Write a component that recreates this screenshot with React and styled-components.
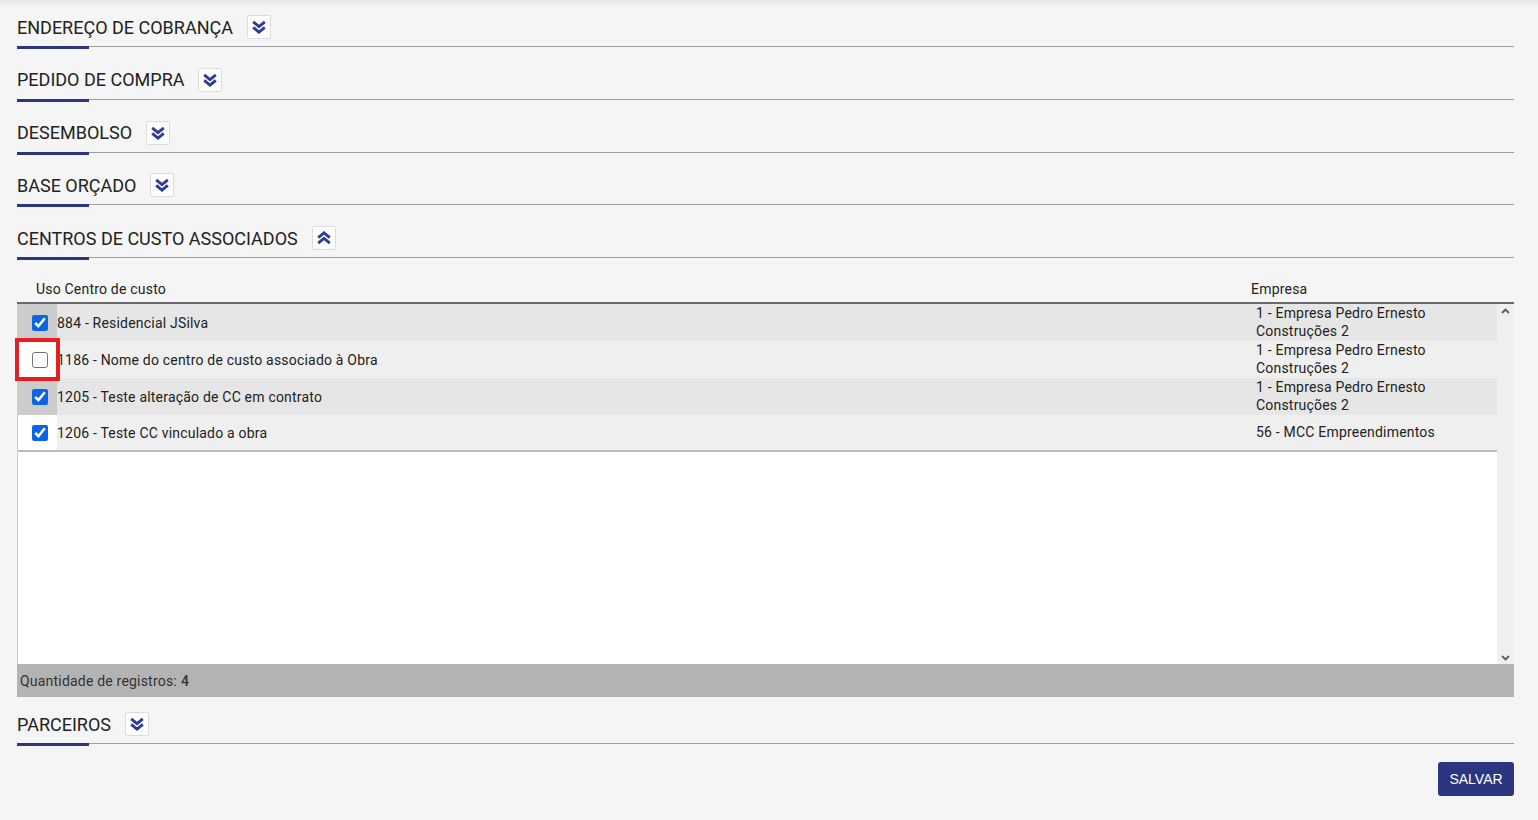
import React, { useState } from 'react';
import styled, { createGlobalStyle } from 'styled-components';

const GlobalStyle = createGlobalStyle`
  html, body {
    margin: 0;
    padding: 0;
    background: #f5f5f5;
  }
  body {
    font-family: Roboto, "Liberation Sans", Arial, sans-serif;
    color: #222;
  }
`;

const Page = styled.div`
  min-height: 820px;
  box-sizing: border-box;
  padding: 15px 24px 0 17px;
  background: linear-gradient(#e6e6e6 0, #f5f5f5 7px);
`;

const Section = styled.section`
  margin-bottom: ${props => props.last ? '0' : '18.75px'};
`;

const SectionHeader = styled.div`
  display: flex;
  align-items: center;
  height: 24px;
`;

const SectionTitle = styled.h2`
  margin: 0;
  padding-top: 1px;
  font-size: 18px;
  font-weight: 400;
  line-height: 24px;
  color: #222;
  text-transform: uppercase;
`;

const ToggleButton = styled.button`
  margin-left: 14px;
  width: 24px;
  height: 24px;
  padding: 0;
  display: flex;
  align-items: center;
  justify-content: center;
  background: #fff;
  border: 1px solid #dcdcdc;
  border-radius: 2px;
  cursor: pointer;
`;

const Rule = styled.div`
  display: flex;
  margin-top: 7px;
  height: 3px;
`;

const RuleAccent = styled.div`
  width: 72px;
  height: 3px;
  background: #2b3580;
`;

const RuleLine = styled.div`
  flex: 1;
  border-top: 1px solid #9e9e9e;
`;

const TableWrap = styled.div`
  margin-top: 18px;
  font-size: 14px;
  letter-spacing: 0.2px;
`;

const HeadRow = styled.div`
  display: grid;
  grid-template-columns: 1fr 263px;
  align-items: center;
  height: 22px;
  padding-bottom: 2px;
  border-bottom: 2px solid #6a6a6a;
`;

const HeadCell = styled.div`
  padding-left: ${props => props.pad || 0}px;
  color: #222;
`;

const TableBody = styled.div`
  display: grid;
  grid-template-columns: 1fr 17px;
  height: 360px;
  background: #fff;
  border-left: 1px solid #cfcfcf;
`;

const RowList = styled.div`
  display: flex;
  flex-direction: column;
`;

const Rows = styled.div`
  border-bottom: 2px solid #bdbdbd;
`;

const Row = styled.div`
  display: grid;
  grid-template-columns: 39px 1fr 246px;
  min-height: 35px;
  background: ${props => props.alt ? '#e6e6e6' : '#efefef'};
`;

const CheckCell = styled.label`
  display: flex;
  align-items: center;
  justify-content: flex-end;
  padding-right: 9px;
  background: ${props => props.alt ? '#cccccc' : '#ffffff'};
  ${props => props.highlight && `
    outline: 4px solid #e31e24;
    outline-offset: -1px;
    position: relative;
    z-index: 1;
  `}
`;

const Check = styled.input`
  width: 16px;
  height: 16px;
  margin: 0;
  accent-color: #0b63e5;
  cursor: pointer;
`;

const NameCell = styled.div`
  display: flex;
  align-items: center;
  color: #222;
`;

const CompanyCell = styled.div`
  display: flex;
  align-items: center;
  padding: 0 6px 1px 5px;
  line-height: 18px;
  color: #222;
`;

const ScrollTrack = styled.div`
  display: flex;
  flex-direction: column;
  justify-content: space-between;
  align-items: center;
  padding: 4px 0 3px;
  background: #efefef;
`;

const Footer = styled.div`
  height: 33px;
  display: flex;
  align-items: center;
  padding-left: 3px;
  background: #b3b3b3;
  color: #333;
  letter-spacing: 0.2px;
`;

const Count = styled.span`
  font-weight: 500;
  margin-left: 4px;
`;

const Actions = styled.div`
  display: flex;
  justify-content: flex-end;
  margin-top: 16px;
`;

const SaveButton = styled.button`
  width: 76px;
  height: 34px;
  background: #2b3580;
  color: #fff;
  border: none;
  border-radius: 3px;
  font-family: "Liberation Sans", Arial, sans-serif;
  font-size: 14px;
  cursor: pointer;
`;

function DoubleChevron({ up }) {
  return (
    <svg width="14" height="14" viewBox="0 0 14 14" fill="none"
      stroke="#2f3b96" strokeWidth="2.8" strokeLinecap="butt" strokeLinejoin="miter"
      style={{ transform: up ? 'rotate(180deg)' : 'none' }}>
      <polyline points="1.2,1.8 7,6.6 12.8,1.8" />
      <polyline points="1.2,7.4 7,12.2 12.8,7.4" />
    </svg>
  );
}

function SmallChevron({ up }) {
  return (
    <svg width="9" height="6" viewBox="0 0 9 6" fill="none" stroke="#5a5a5a" strokeWidth="1.8">
      {up ? <polyline points="1,5 4.5,1.5 8,5" /> : <polyline points="1,1 4.5,4.5 8,1" />}
    </svg>
  );
}

const sections = [
  { id: 'cobranca', title: 'Endereço de cobrança' },
  { id: 'pedido', title: 'Pedido de compra' },
  { id: 'desembolso', title: 'Desembolso' },
  { id: 'orcado', title: 'Base orçado' },
];

const centros = [
  { id: 884, name: '884 - Residencial JSilva', empresa: ['1 - Empresa Pedro Ernesto', 'Construções 2'], checked: true },
  { id: 1186, name: '1186 - Nome do centro de custo associado à Obra', empresa: ['1 - Empresa Pedro Ernesto', 'Construções 2'], checked: false, highlight: true },
  { id: 1205, name: '1205 - Teste alteração de CC em contrato', empresa: ['1 - Empresa Pedro Ernesto', 'Construções 2'], checked: true },
  { id: 1206, name: '1206 - Teste CC vinculado a obra', empresa: ['56 - MCC Empreendimentos'], checked: true },
];

function SectionBlock({ title, open, last, children }) {
  return (
    <Section last={last}>
      <SectionHeader>
        <SectionTitle>{title}</SectionTitle>
        <ToggleButton aria-label="expandir">
          <DoubleChevron up={open} />
        </ToggleButton>
      </SectionHeader>
      <Rule>
        <RuleAccent />
        <RuleLine />
      </Rule>
      {children}
    </Section>
  );
}

export default function App() {
  const [checks, setChecks] = useState(() =>
    Object.fromEntries(centros.map(c => [c.id, c.checked]))
  );

  return (
    <Page>
      <GlobalStyle />
      {sections.map(s => (
        <SectionBlock key={s.id} title={s.title} />
      ))}

      <SectionBlock title="Centros de custo associados" open last>
        <TableWrap>
          <HeadRow>
            <HeadCell pad={19}>Uso Centro de custo</HeadCell>
            <HeadCell>Empresa</HeadCell>
          </HeadRow>
          <TableBody>
            <RowList>
              <Rows>
                {centros.map((c, i) => {
                  const alt = i % 2 === 0;
                  return (
                    <Row key={c.id} alt={alt}>
                      <CheckCell alt={alt} highlight={c.highlight}>
                        <Check
                          type="checkbox"
                          checked={checks[c.id]}
                          onChange={() => setChecks(prev => ({ ...prev, [c.id]: !prev[c.id] }))}
                        />
                      </CheckCell>
                      <NameCell>{c.name}</NameCell>
                      <CompanyCell>
                        <div>
                          {c.empresa.map(line => <div key={line}>{line}</div>)}
                        </div>
                      </CompanyCell>
                    </Row>
                  );
                })}
              </Rows>
            </RowList>
            <ScrollTrack>
              <SmallChevron up />
              <SmallChevron />
            </ScrollTrack>
          </TableBody>
          <Footer>
            Quantidade de registros:<Count>4</Count>
          </Footer>
        </TableWrap>
      </SectionBlock>

      <div style={{ height: 15 }} />
      <SectionBlock title="Parceiros" last />

      <Actions>
        <SaveButton>SALVAR</SaveButton>
      </Actions>
    </Page>
  );
}
